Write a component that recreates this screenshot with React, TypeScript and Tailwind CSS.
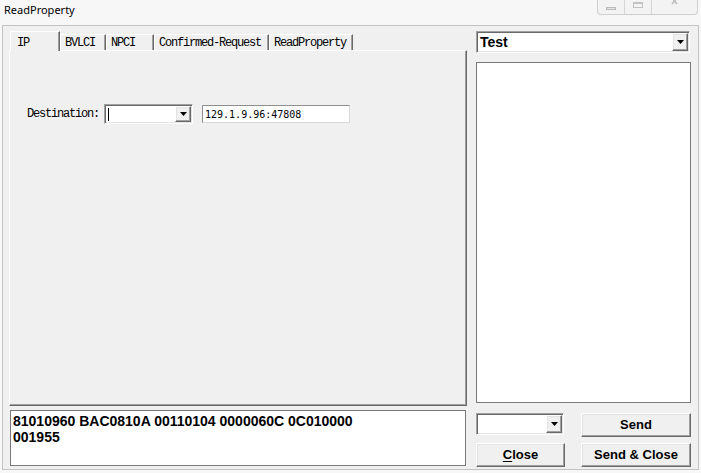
const sunken =
  "border border-t-[#a0a0a0] border-l-[#a0a0a0] border-r-white border-b-white shadow-[inset_1px_1px_0_#696969,inset_-1px_-1px_0_#e3e3e3]";
const raised =
  "border border-t-white border-l-white border-r-[#696969] border-b-[#696969] shadow-[inset_-1px_-1px_0_#a0a0a0,inset_1px_1px_0_#e3e3e3]";
const sans = "font-['Liberation_Sans',Arial,sans-serif]";
const mono = "font-['Liberation_Mono','Courier_New',monospace] text-[12px] tracking-[-1.2px]";

function DropArrow() {
  return (
    <div className={`flex h-full w-[16px] items-center justify-center bg-[#f0f0f0] ${raised}`}>
      <svg width="7" height="4" viewBox="0 0 7 4">
        <path d="M0 0h7L3.5 4z" fill="#000" />
      </svg>
    </div>
  );
}

function Tab({ label, width, active }: { label: string; width: number; active?: boolean }) {
  if (active) {
    return (
      <div
        className={`relative z-10 -mb-[1px] h-[20px] border-l border-t border-r border-l-white border-t-white border-r-[#696969] bg-[#f0f0f0] pl-[6px] pt-[2px] text-black shadow-[inset_-1px_0_0_#a0a0a0] ${mono}`}
        style={{ width }}
      >
        {label}
      </div>
    );
  }
  return (
    <div
      className={`h-[16px] border-l border-t border-r border-l-white border-t-white border-r-[#696969] bg-[#f0f0f0] pl-[4px] pt-[0px] leading-[16px] text-black shadow-[inset_-1px_0_0_#a0a0a0] ${mono}`}
      style={{ width }}
    >
      {label}
    </div>
  );
}

function Button({ children, width }: { children: React.ReactNode; width: number }) {
  return (
    <div
      className={`flex h-[24px] items-center justify-center bg-[#f0f0f0] text-[13px] font-bold text-black ${sans} ${raised}`}
      style={{ width }}
    >
      {children}
    </div>
  );
}

export default function App() {
  return (
    <div className="flex h-[473px] w-[701px] flex-col overflow-hidden bg-[#f7f7f7]">
      {/* title bar */}
      <div className="flex h-[25px] items-start">
        <div className="pl-[4px] pt-[2px] font-['Noto_Sans',sans-serif] text-[11px] leading-[16px] text-black">
          ReadProperty
        </div>
        <div className="ml-auto mr-[3px] flex h-[15px] w-[101px] overflow-hidden rounded-b-[4px] border border-t-0 border-[#cfcfcf] bg-[#f3f3f3]">
          <div className="flex w-[27px] items-start justify-center border-r border-[#d6d6d6] pt-[7px]">
            <div className="h-[3px] w-[10px] border border-[#b9b9b9] bg-[#e2e2e2]" />
          </div>
          <div className="flex w-[27px] items-start justify-center border-r border-[#d6d6d6] pt-[2px]">
            <div className="h-[6px] w-[10px] border border-t-2 border-[#c2c2c2]" />
          </div>
          <div className="flex flex-1 items-start justify-center">
            <svg width="8" height="5" viewBox="0 0 8 5">
              <path d="M1 -2L6 4M6 -2L1 4" stroke="#bdbdbd" strokeWidth="1.6" />
            </svg>
          </div>
        </div>
      </div>

      {/* client area */}
      <div className="mx-[2px] mb-[3px] flex flex-1 gap-[9px] border border-[#c3c3c3] bg-[#f0f0f0] pl-[6px] pt-[5px]">
        {/* left column */}
        <div className="flex w-[458px] flex-col">
          <div className="flex h-[19px] items-end pl-[1px]">
            <Tab label="IP" width={50} active />
            <Tab label="BVLCI" width={46} />
            <Tab label="NPCI" width={48} />
            <Tab label="Confirmed-Request" width={115} />
            <Tab label="ReadProperty" width={84} />
          </div>
          <div className="h-[356px] border border-t-white border-l-white border-r-[#696969] border-b-[#696969] bg-[#f0f0f0] pl-[17px] pt-[53px] shadow-[inset_-1px_-1px_0_#a0a0a0]">
            <div className="flex items-center">
              <div className={`text-black ${mono}`}>Destination:</div>
              <div className={`ml-[5px] flex h-[20px] w-[89px] bg-white p-[1px] ${sunken}`}>
                <div className="flex flex-1 items-center pl-[2px]">
                  <div className="h-[13px] w-[1px] bg-black" />
                </div>
                <DropArrow />
              </div>
              <div className="ml-[9px] flex h-[18px] w-[148px] items-center border border-t-[#8e8e8e] border-l-[#8e8e8e] border-r-[#d9d9d9] border-b-[#d9d9d9] bg-white pl-[2px] font-['DejaVu_Sans_Mono',monospace] text-[10px] text-black">
                129.1.9.96:47808
              </div>
            </div>
          </div>
          <div
            className={`mx-[1px] mt-[4px] h-[56px] border border-[#7a7a7a] bg-white pl-[2px] pt-[2px] text-[14px] font-bold leading-[16px] text-black ${sans}`}
          >
            81010960 BAC0810A 00110104 0000060C 0C010000
            <br />
            001955
          </div>
        </div>

        {/* right column */}
        <div className="flex w-[215px] flex-col">
          <div className={`flex h-[22px] w-[214px] bg-white p-[1px] ${sunken}`}>
            <div className={`flex flex-1 items-center pl-[2px] text-[14px] font-bold text-black ${sans}`}>
              Test
            </div>
            <DropArrow />
          </div>
          <div className="mt-[9px] h-[341px] border border-[#7a7a7a] bg-white" />
          <div className="mt-[10px] flex items-start justify-between">
            <div className={`flex h-[22px] w-[88px] bg-white p-[1px] ${sunken}`}>
              <div className="flex-1" />
              <DropArrow />
            </div>
            <Button width={110}>Send</Button>
          </div>
          <div className="mt-[6px] flex items-start justify-between">
            <Button width={89}>
              <span className="underline underline-offset-[2px]">C</span>lose
            </Button>
            <Button width={110}>Send &amp; Close</Button>
          </div>
        </div>
      </div>
    </div>
  );
}
